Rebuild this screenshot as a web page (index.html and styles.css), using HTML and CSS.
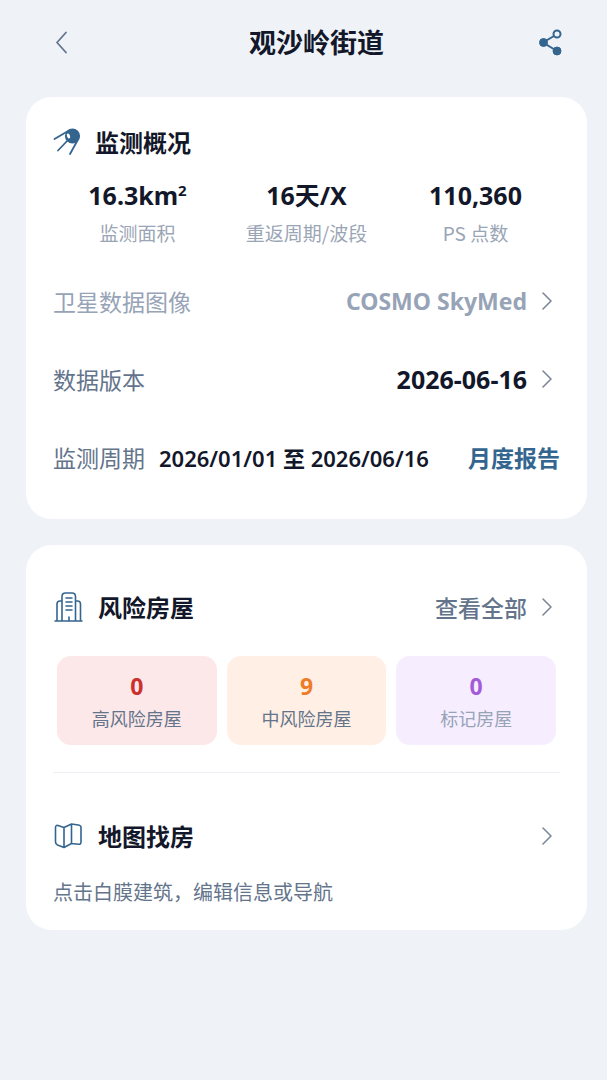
FILE: index.html
```html
<!DOCTYPE html>
<html lang="zh-CN">
<head>
    <meta charset="UTF-8">
    <meta name="viewport" content="width=device-width, initial-scale=1.0">
    <title>观沙岭街道</title>
    <link rel="stylesheet" href="styles.css">
</head>
<body>
    <header class="navbar">
        <button class="icon-btn" aria-label="返回">
            <svg width="24" height="24" viewBox="0 0 24 24" fill="none" stroke="#64748b" stroke-width="1.800" stroke-linecap="round" stroke-linejoin="round"><path d="M16 2.500L7 12.500l9 10"/></svg>
        </button>
        <h1 class="navbar-title">观沙岭街道</h1>
        <button class="icon-btn" aria-label="分享">
            <svg width="26" height="28" viewBox="0 0 26 28" fill="none" stroke="#34658f" stroke-width="2"><path d="M16 8L5 14.500 19 23"/><circle cx="19" cy="6" r="3.500"/><circle cx="5.500" cy="14.500" r="4" fill="#34658f" stroke-width="1"/><circle cx="19" cy="23" r="4" fill="#34658f" stroke-width="1"/></svg>
        </button>
    </header>

    <main class="content">
        <!-- 监测概况 -->
        <section class="card overview">
            <div class="card-header">
                <svg class="card-icon satellite" width="28" height="30" viewBox="0 0 28 30" fill="none" stroke="#34658f" stroke-width="1.800" stroke-linecap="round"><circle cx="19.500" cy="9" r="6.700" fill="#34658f"/><path d="M1.500 12L16 3.500M5 23.500L15 13M17 27L24.500 13.500"/><ellipse cx="15.500" cy="9" rx="1.500" ry="2.600" fill="#fff" stroke="none" transform="rotate(-20 15.500 9)"/></svg>
                <h2 class="card-title">监测概况</h2>
            </div>
            <div class="stats">
                <div class="stat">
                    <div class="stat-value">16.3km<sup>2</sup></div>
                    <div class="stat-label">监测面积</div>
                </div>
                <div class="stat">
                    <div class="stat-value">16天/X</div>
                    <div class="stat-label">重返周期/波段</div>
                </div>
                <div class="stat">
                    <div class="stat-value">110,360</div>
                    <div class="stat-label">PS 点数</div>
                </div>
            </div>
            <button class="row muted">
                <span class="row-label">卫星数据图像</span>
                <span class="row-value">COSMO SkyMed</span>
                <svg class="arrow" width="12" height="20" viewBox="0 0 12 20"><path d="M2 2l8 8-8 8"/></svg>
            </button>
            <button class="row">
                <span class="row-label">数据版本</span>
                <span class="row-value">2026-06-16</span>
                <svg class="arrow" width="12" height="20" viewBox="0 0 12 20"><path d="M2 2l8 8-8 8"/></svg>
            </button>
            <div class="row">
                <span class="row-label">监测周期</span>
                <span class="period">2026/01/01 至 2026/06/16</span>
                <a class="report-link" href="#">月度报告</a>
            </div>
        </section>

        <!-- 风险房屋 -->
        <section class="card houses">
            <div class="card-header">
                <svg class="card-icon" width="30" height="30" viewBox="0 0 30 30" fill="none" stroke="#34658f" stroke-width="1.600" stroke-linecap="round" stroke-linejoin="round"><path d="M2 29h27M4 29V12q0-3 3-3h2M27.500 29V12q0-3-3-3h-2M9 29V4.500q0-3.500 3.500-3.500h6.500q3.500 0 3.500 3.500V29M13 6h6M13 10h6M13 14h6M13 18h6M16 25v4"/></svg>
                <h2 class="card-title">风险房屋</h2>
                <a class="view-all" href="#">查看全部
                    <svg class="arrow" width="12" height="20" viewBox="0 0 12 20"><path d="M2 2l8 8-8 8"/></svg>
                </a>
            </div>
            <div class="risks">
                <button class="risk high">
                    <span class="risk-count">0</span>
                    <span class="risk-label">高风险房屋</span>
                </button>
                <button class="risk medium">
                    <span class="risk-count">9</span>
                    <span class="risk-label">中风险房屋</span>
                </button>
                <button class="risk marked">
                    <span class="risk-count">0</span>
                    <span class="risk-label">标记房屋</span>
                </button>
            </div>
            <a class="card-header map-link" href="#">
                <svg class="card-icon" width="30" height="30" viewBox="0 0 30 30" fill="none" stroke="#34658f" stroke-width="1.600" stroke-linejoin="round"><path d="M2.500 6.500q0-2.500 2.500-2l6 2 7.500-3.500 7 1q2.500.5 2.500 2.500V21q0 2.500-2.500 2.300l-7-.8-7.500 4-6.500-2.500q-2-1-2-3zM11 6.500v20M18.500 3v19.500"/></svg>
                <h2 class="card-title">地图找房</h2>
                <svg class="arrow" width="12" height="20" viewBox="0 0 12 20"><path d="M2 2l8 8-8 8"/></svg>
            </a>
            <p class="hint">点击白膜建筑，编辑信息或导航</p>
        </section>
    </main>
</body>
</html>
```

FILE: styles.css
```css
* {
    box-sizing: border-box;
}

body {
    margin: 0;
    background-color: #eff3f8;
    color: #13172a;
    font-family: "Noto Sans CJK SC", sans-serif;
}

h1, h2, p {
    margin: 0;
}

button {
    padding: 0;
    border: none;
    background: none;
    color: inherit;
    font-family: inherit;
    cursor: pointer;
}

a {
    color: inherit;
    text-decoration: none;
}

svg {
    display: block;
    flex: none;
}

.navbar {
    display: flex;
    align-items: center;
    height: 84px;
    padding: 0 36px 0 42px;
}

.navbar-title {
    flex: 1;
    padding-left: 20px;
    font-size: 27px;
    font-weight: 700;
    line-height: 40px;
    text-align: center;
}

.icon-btn {
    display: flex;
    align-items: center;
    justify-content: center;
    width: 40px;
    height: 40px;
}

.content {
    display: flex;
    flex-direction: column;
    gap: 26px;
    padding: 13px 20px 26px 26px;
}

.card {
    padding: 0 27px;
    border-radius: 26px;
    background-color: #fff;
}

.overview {
    padding-top: 27px;
    padding-bottom: 23px;
}

.houses {
    padding-top: 44px;
    padding-bottom: 22px;
}

.card-header {
    display: flex;
    align-items: center;
    gap: 15px;
    height: 36px;
}

.card-title {
    font-size: 24px;
    font-weight: 700;
    line-height: 36px;
}

.satellite {
    margin-right: -1px;
}

.arrow {
    fill: none;
    stroke: #7c8797;
    stroke-width: 1.6;
    stroke-linecap: round;
    stroke-linejoin: round;
}

.stats {
    display: flex;
    margin-top: 18px;
}

.stat {
    flex: 1;
    text-align: center;
}

.stat-value {
    font-family: "Noto Sans", "Noto Sans CJK SC", sans-serif;
    font-size: 25px;
    font-weight: 700;
    line-height: 34px;
}

.stat-value sup {
    font-size: 15px;
    line-height: 0;
}

.stat-label {
    margin-top: 7px;
    color: #9aa5b5;
    font-size: 19px;
    line-height: 28px;
}

.row {
    display: flex;
    align-items: center;
    width: 100%;
    height: 78px;
    text-align: left;
}

.stats + .row {
    margin-top: 15px;
}

.row-label {
    color: #64748b;
    font-size: 23px;
}

.row-value {
    margin-left: auto;
    font-family: "Noto Sans", "Noto Sans CJK SC", sans-serif;
    font-size: 25px;
    font-weight: 700;
}

.muted .row-label,
.muted .row-value {
    color: #97a3b6;
}

.muted .row-value {
    font-size: 23px;
}

.row .arrow,
.view-all .arrow {
    margin: 0 7px 0 14px;
}

.period {
    margin-left: 14px;
    font-family: "Noto Sans", "Noto Sans CJK SC", sans-serif;
    font-size: 22px;
    font-weight: 600;
    white-space: nowrap;
}

.report-link {
    margin-left: auto;
    color: #34658f;
    font-size: 23px;
    font-weight: 700;
    white-space: nowrap;
}

.view-all {
    display: flex;
    align-items: center;
    margin-left: auto;
    color: #64748b;
    font-size: 23px;
    font-weight: 500;
}

.risks {
    display: flex;
    gap: 10px;
    padding: 31px 4px 27px;
    border-bottom: 1px solid #eceff3;
}

.risk {
    display: flex;
    flex: 1;
    flex-direction: column;
    align-items: center;
    height: 89px;
    padding-top: 15px;
    border-radius: 14px;
}

.risk-count {
    font-family: "Noto Sans", "Noto Sans CJK SC", sans-serif;
    font-size: 23px;
    font-weight: 700;
    line-height: 30px;
}

.risk-label {
    margin-top: 3px;
    color: #64748b;
    font-size: 18px;
    line-height: 28px;
}

.high {
    background-color: #fce8e8;
}

.high .risk-count {
    color: #cc302d;
}

.medium {
    background-color: #ffefe5;
}

.medium .risk-count {
    color: #ed7b28;
}

.marked {
    background-color: #f6edff;
}

.marked .risk-count {
    color: #a45bd8;
}

.marked .risk-label {
    color: #97a3b6;
}

.map-link {
    margin-top: 45px;
}

.map-link .arrow {
    margin: 0 7px 0 auto;
}

.hint {
    margin-top: 22px;
    color: #64748b;
    font-size: 20px;
    line-height: 32px;
}
```
